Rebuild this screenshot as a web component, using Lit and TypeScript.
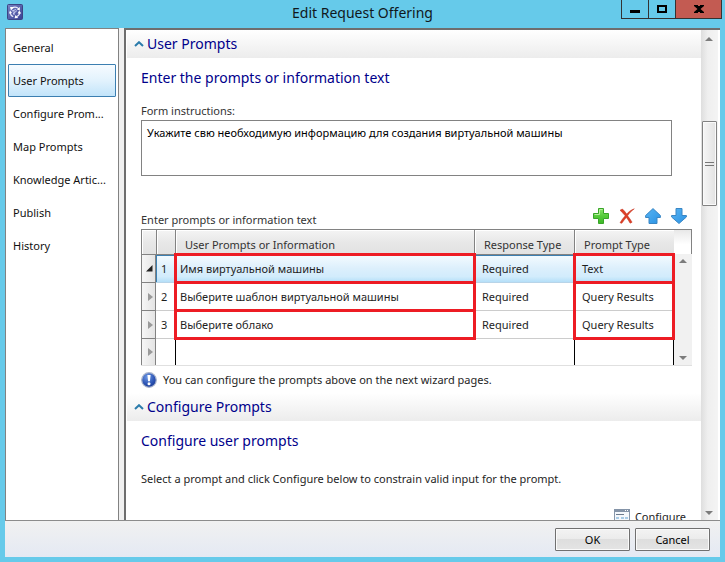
import { LitElement, html, css, svg } from "lit";
import { customElement, state } from "lit/decorators.js";
import { classMap } from "lit/directives/class-map.js";

interface PromptRow {
  text: string;
  response: string;
  type: string;
}

const NAV = [
  "General",
  "User Prompts",
  "Configure Prom...",
  "Map Prompts",
  "Knowledge Artic...",
  "Publish",
  "History",
];

const ROWS: PromptRow[] = [
  { text: "Имя виртуальной машины", response: "Required", type: "Text" },
  { text: "Выберите шаблон виртуальной машины", response: "Required", type: "Query Results" },
  { text: "Выберите облако", response: "Required", type: "Query Results" },
];

const icon = (w: number, h: number, body: unknown) => html`<svg
  width=${w}
  height=${h}
  viewBox="0 0 ${w} ${h}"
  aria-hidden="true"
>${body}</svg>`;

const appIcon = () => icon(16, 16, svg`
  <defs><linearGradient id="app" x1="0" y1="0" x2="1" y2="1">
    <stop offset="0" stop-color="#7c84c4"/><stop offset="1" stop-color="#363f92"/>
  </linearGradient></defs>
  <rect x=".5" y=".5" width="15" height="15" rx="1" fill="url(#app)" stroke="#3c4484"/>
  <path d="M3.200 8.800a5 5 0 0 0 3 3.800M12.800 8.600a5 5 0 0 1-3.400 4M5 4.200a5 5 0 0 1 5.800-.2" fill="none" stroke="#e8eafa" stroke-width="1.200"/>
  <path d="M3 3h4L4 6.600zM12.800 3v3.600L9.600 5.200zM10.600 9.400h3.600l-2 -3zM2 9.400l1-3 2 2.600zM8.400 11l2.800 3-3.600.2z" fill="#fff"/>
  <path d="M5 7l4-1.500M6 10l4-3.500M7 11V7" fill="none" stroke="#c9cdf0"/>`);

const chevron = () => icon(10, 6, svg`
  <path d="M1 5L5 1.2 9 5" fill="none" stroke="#2b7cab" stroke-width="2"/>`);

const addIcon = () => icon(16, 16, svg`
  <defs><linearGradient id="add" x1="0" y1="0" x2="0" y2="1">
    <stop offset="0" stop-color="#8be36a"/><stop offset=".5" stop-color="#55cc3a"/><stop offset="1" stop-color="#3db828"/>
  </linearGradient></defs>
  <path d="M5.500.5h5v5h5v5h-5v5h-5v-5h-5v-5h5z" fill="url(#add)" stroke="#39a528" stroke-linejoin="round"/>
  <path d="M6.500 1.500h3M6.500 2v4.500h-5" fill="none" stroke="#b6f09e"/>`);

const deleteIcon = () => icon(16, 16, svg`
  <path d="M1 2.200L3.400 1c1.700 1.500 3 3.100 4.200 5C9.600 3.800 12 2 15.300.8c-2.900 2.200-4.900 4.300-6.700 7 1.700 2.100 3 4 4.500 6.400l-2 1c-1.200-2.200-2.300-3.900-3.700-5.700-1.700 1.800-3 3.400-4.600 5.800L1 14.700c1.600-2.600 3.300-4.800 5.200-6.900C4.600 5.800 3 4 1 2.200z" fill="#dd3f27" stroke="#c23520" stroke-width=".5"/>`);

const upIcon = () => icon(16, 16, svg`
  <defs><linearGradient id="up" x1="0" y1="0" x2="1" y2="1">
    <stop offset="0" stop-color="#58b4f2"/><stop offset="1" stop-color="#2a92e4"/>
  </linearGradient></defs>
  <path d="M8 .6l7.400 6.900v2h-3.400v6h-8v-6H.6v-2z" fill="url(#up)" stroke="#3a86c4" stroke-linejoin="round"/>`);

const downIcon = () => icon(16, 16, svg`
  <defs><linearGradient id="down" x1="0" y1="0" x2="1" y2="1">
    <stop offset="0" stop-color="#58b4f2"/><stop offset="1" stop-color="#2a92e4"/>
  </linearGradient></defs>
  <path d="M5 .5h6v7h4.400v1.500L8 15.500.6 9V7.500H5z" fill="url(#down)" stroke="#3a86c4" stroke-linejoin="round"/>`);

const infoIcon = () => icon(16, 16, svg`
  <defs><radialGradient id="info" cx=".4" cy=".3" r=".8">
    <stop offset="0" stop-color="#6f9ae6"/><stop offset=".6" stop-color="#2c54b4"/><stop offset="1" stop-color="#16348c"/>
  </radialGradient></defs>
  <circle cx="8" cy="8" r="7.300" fill="url(#info)" stroke="#a9b4cc" stroke-width="1.200"/>
  <path d="M6.400 3h3.200l-.7 6.200H7.100z" fill="#fff"/><circle cx="8" cy="11.700" r="1.500" fill="#fff"/>`);

const formIcon = () => icon(16, 16, svg`
  <rect x=".5" y=".5" width="15" height="15" fill="#f4f8fc" stroke="#8797ab"/>
  <path d="M0 0h16v3H0z" fill="#8494a8"/>
  <path d="M11 1h1v1h-1zM13 1h1v1h-1z" fill="#fff"/>
  <path d="M2 5.500h8" stroke="#6c7b8e"/>
  <path d="M2 8h3v2H2zM7 8h3v2H7zM11 8h3v2h-3zM3 12h10v2H3z" fill="#a8cbe6"/>`);

const arrow = (up: boolean) => icon(8, 4, up
  ? svg`<path d="M0 4l4-4 4 4z" fill="#7c7c7c"/>`
  : svg`<path d="M0 0l4 4 4-4z" fill="#7c7c7c"/>`);

@customElement("app-root")
export class AppRoot extends LitElement {
  @state() private page = 1;
  @state() private selected = 0;

  static styles = css`
    :host {
      display: block;
      font-family: "Noto Sans", "Open Sans", sans-serif;
      font-size: 11px;
      line-height: 16px;
      color: #1e1e1e;
    }
    * { box-sizing: border-box; }
    svg { display: block; flex: none; }
    button, textarea { font: inherit; color: inherit; }
    button { padding: 0; margin: 0; border: 0; background: none; border-radius: 0; }
    h1, h2, h3, p { margin: 0; font-weight: 400; }
    .window {
      display: flex;
      flex-direction: column;
      height: 100vh;
      padding: 0 5px 5px;
      background: #66caea;
    }
    .titlebar {
      display: grid;
      grid-template-columns: 1fr auto 1fr;
      height: 28px;
      flex: none;
    }
    .logo { padding: 4px 2px; }
    .titlebar h1 { font-size: 14px; line-height: 26px; color: #10181c; }
    .controls { display: flex; justify-content: flex-end; height: 19px; margin-right: -2px; }
    .controls button {
      display: flex;
      justify-content: center;
      align-items: center;
      width: 27px;
      border: 1px solid #333;
      border-top: 0;
      border-right: 0;
    }
    .controls .close { width: 47px; border-right: 1px solid #333; background: #c35b52; }
    .body { display: flex; flex: 1; min-height: 0; background: #f0f0f0; }
    nav {
      display: flex;
      flex-direction: column;
      width: 114px;
      flex: none;
      padding: 2px;
      border: 1px solid #828282;
      border-bottom: 0;
      background: #fff;
    }
    nav a {
      height: 33px;
      padding: 0 4px;
      border: 1px solid transparent;
      border-radius: 1px;
      line-height: 31px;
      color: #111;
      text-decoration: none;
      white-space: nowrap;
    }
    nav a.current {
      border-color: #3c7fb1;
      background: linear-gradient(#f6fbff, #e2f2fd 50%, #c2e4fa);
    }
    .main {
      display: flex;
      flex: 1;
      min-width: 0;
      margin-left: 5px;
      border: 2px solid #6e6e6e;
      border-width: 2px 0 0 2px;
      background: #fff;
    }
    .content { flex: 1; min-width: 0; overflow: hidden; padding-left: 1px; }
    .section-head {
      display: flex;
      align-items: center;
      gap: 3px;
      height: 28px;
      padding-left: 7px;
      background: linear-gradient(#fff, #ececec);
      font-size: 14px;
      line-height: 28px;
      color: #00008b;
    }
    .section { padding: 0 9px 0 14px; }
    .section h3 { height: 40px; font-size: 14px; line-height: 40px; color: #00008b; }
    .label { display: block; line-height: 18px; color: #333; }
    .instructions { padding: 4px 20px 0 0; }
    textarea {
      display: block;
      width: 100%;
      height: 56px;
      padding: 4px 5px;
      border: 1px solid #828282;
      border-radius: 0;
      outline: 0;
      resize: none;
      overflow: hidden;
      background: #fff;
      color: #000;
    }
    .toolbar { display: flex; justify-content: space-between; margin-top: 32px; height: 21px; }
    .toolbar .label { padding-top: 3px; }
    .tools { display: flex; gap: 10px; padding-right: 5px; height: 16px; }
    .grid { display: flex; border-bottom: 1px solid #e0e0e0; }
    table { flex: 1; min-width: 0; table-layout: fixed; border-collapse: separate; border-spacing: 0; }
    .c-mark { width: 15px; }
    .c-num { width: 19px; }
    .c-type { width: 100px; }
    th, td { padding: 0; font-weight: 400; text-align: left; white-space: nowrap; }
    thead th {
      height: 26px;
      padding: 6px 0 0 9px;
      border: 1px solid #828282;
      border-width: 1px 0 1px 1px;
      box-shadow: inset 1px 1px #fff;
      background: linear-gradient(#f4f4f4, #e8e8e8 50%, #e2e2e2);
      color: #333;
    }
    tbody td, tbody th { position: relative; height: 28px; padding-left: 4px; border-bottom: 1px solid #ccc; }
    tbody td.num { padding-left: 5px; }
    tbody td.prompt { padding-left: 4px; border-left: 1px solid #000; }
    tbody td.type { padding-left: 8px; }
    tbody td.kind { border-left: 1px solid #000; border-right: 1px solid #000; padding-left: 7px; }
    tbody th.mark {
      padding: 0 0 0 6px;
      border: 1px solid #828282;
      border-top: 0;
      background: linear-gradient(90deg, #f6f6f6, #e4e4e4);
    }
    tbody tr.selected th.mark { padding-left: 4px; }
    tbody tr:last-child > * { height: 26px; border-bottom: 0; }
    tr.selected td {
      background: linear-gradient(#f4fbff, #dceffc 50%, #d2ecfc 80%, #b4dff8);
      border-bottom-color: #b8d4e8;
    }
    tr.selected td.num, tr.selected td.type {
      box-shadow: inset 1px 1px #3c7fb1, inset -1px 0 #3c7fb1;
    }
    .callout {
      position: absolute;
      z-index: 1;
      inset: -2px;
      border: 3px solid #ed1c24;
      pointer-events: none;
    }
    .callout.two { bottom: -30px; }
    .grid-scroll { display: flex; flex-direction: column; width: 18px; flex: none; }
    .grid-scroll .cap {
      height: 25px;
      border: 1px solid #828282;
      border-width: 1px 1px 0 0;
      background: linear-gradient(#e8e8e8, #fff 60%);
    }
    .bar {
      display: flex;
      flex-direction: column;
      align-items: center;
      justify-content: space-between;
      flex: 1;
      padding: 5px 0;
      background: #f1f1f1;
    }
    .note { display: flex; align-items: center; gap: 6px; height: 27px; }
    .description { padding: 10px 0; }
    .configure-row { display: flex; justify-content: flex-end; padding-top: 12px; }
    .configure-row button { display: flex; gap: 5px; padding: 0 6px; line-height: 16px; }
    .page-scroll {
      position: relative;
      width: 19px;
      flex: none;
      display: flex;
      flex-direction: column;
      align-items: center;
      justify-content: space-between;
      padding: 7px 1px 5px 0;
      border-right: 2px solid #fff;
      background: linear-gradient(90deg, #dedede, #efefef 40%, #f4f4f4);
    }
    .thumb {
      position: absolute;
      top: 91px;
      left: 1px;
      width: 15px;
      height: 85px;
      border: 1px solid #828282;
      border-radius: 1px;
      box-shadow: inset 0 0 0 1px #fafafa;
      background: linear-gradient(90deg, #f6f6f6, #e2e2e2);
      display: grid;
      place-items: center;
    }
    footer {
      display: flex;
      justify-content: flex-end;
      gap: 5px;
      height: 37px;
      flex: none;
      padding: 7px 10px 0;
      border-top: 1px solid #8c8c8c;
      background: linear-gradient(#f1f1f1, #e4e9f3);
    }
    footer button {
      width: 75px;
      height: 23px;
      border: 1px solid #707070;
      border-radius: 1px;
      box-shadow: inset 0 0 0 1px #fafafa;
      background: linear-gradient(#f3f3f3, #ebebeb 50%, #dedede 50%, #e4e4e4);
      color: #000;
    }
  `;

  private marker(active: boolean) {
    return active
      ? icon(7, 7, svg`<path d="M6.500 0v6.500H0z" fill="#222"/>`)
      : icon(5, 8, svg`<path d="M0 0l5 4-5 4z" fill="#9a9a9a"/>`);
  }

  private row(r: PromptRow, i: number) {
    const on = i === this.selected;
    return html`<tr class=${classMap({ selected: on })} @click=${() => (this.selected = i)}>
      <th class="mark" scope="row">${this.marker(on)}</th>
      <td class="num">${i + 1}</td>
      <td class="prompt">${r.text}<span class="callout"></span></td>
      <td class="type">${r.response}</td>
      <td class="kind">${r.type}${i === 0
        ? html`<span class="callout"></span>`
        : i === 1 ? html`<span class="callout two"></span>` : ""}</td>
    </tr>`;
  }

  render() {
    return html`<div class="window">
      <header class="titlebar">
        <div class="logo">${appIcon()}</div>
        <h1>Edit Request Offering</h1>
        <div class="controls">
          <button aria-label="Minimize">${icon(10, 12, svg`<path d="M0 7h10v3H0z"/>`)}</button>
          <button aria-label="Maximize">${icon(10, 8, svg`<path d="M1 1h8v6H1z" fill="none" stroke="#000" stroke-width="2"/>`)}</button>
          <button class="close" aria-label="Close">${icon(10, 8, svg`<path d="M0 0h4v1h2V0h4v1L6.500 4 10 7v1H6V7H4v1H0V7l3.500-3L0 1z"/>`)}</button>
        </div>
      </header>
      <div class="body">
        <nav>
          ${NAV.map((n, i) => html`<a href="#" class=${classMap({ current: i === this.page })}
            @click=${(e: Event) => { e.preventDefault(); this.page = i; }}>${n}</a>`)}
        </nav>
        <main class="main">
          <div class="content">
            <h2 class="section-head">${chevron()}User Prompts</h2>
            <section class="section">
              <h3>Enter the prompts or information text</h3>
              <div class="instructions">
                <label class="label" for="instructions">Form instructions:</label>
                <textarea id="instructions" spellcheck="false" .value=${"Укажите свю необходимую информацию для создания виртуальной машины"}></textarea>
              </div>
              <div class="toolbar">
                <span class="label">Enter prompts or information text</span>
                <div class="tools">
                  <button aria-label="Add">${addIcon()}</button>
                  <button aria-label="Remove">${deleteIcon()}</button>
                  <button aria-label="Move up">${upIcon()}</button>
                  <button aria-label="Move down">${downIcon()}</button>
                </div>
              </div>
              <div class="grid">
                <table>
                  <colgroup>
                    <col class="c-mark" /><col class="c-num" /><col /><col class="c-type" /><col class="c-type" />
                  </colgroup>
                  <thead>
                    <tr>
                      <th></th><th></th>
                      <th scope="col">User Prompts or Information</th>
                      <th scope="col">Response Type</th>
                      <th scope="col">Prompt Type</th>
                    </tr>
                  </thead>
                  <tbody>
                    ${ROWS.map((r, i) => this.row(r, i))}
                    <tr>
                      <th class="mark">${this.marker(false)}</th>
                      <td></td><td class="prompt"></td><td></td><td class="kind"></td>
                    </tr>
                  </tbody>
                </table>
                <div class="grid-scroll">
                  <div class="cap"></div>
                  <div class="bar">${arrow(true)}${arrow(false)}</div>
                </div>
              </div>
              <p class="note">${infoIcon()}You can configure the prompts above on the next wizard pages.</p>
            </section>
            <h2 class="section-head">${chevron()}Configure Prompts</h2>
            <section class="section">
              <h3>Configure user prompts</h3>
              <p class="description">Select a prompt and click Configure below to constrain valid input for the prompt.</p>
              <div class="configure-row">
                <button>${formIcon()}Configure</button>
              </div>
            </section>
          </div>
          <div class="page-scroll">
            ${arrow(true)}
            <div class="thumb">${icon(9, 4, svg`<path d="M0 .5h9M0 3.500h9" stroke="#777"/>`)}</div>
            ${arrow(false)}
          </div>
        </main>
      </div>
      <footer>
        <button>OK</button>
        <button>Cancel</button>
      </footer>
    </div>`;
  }
}
